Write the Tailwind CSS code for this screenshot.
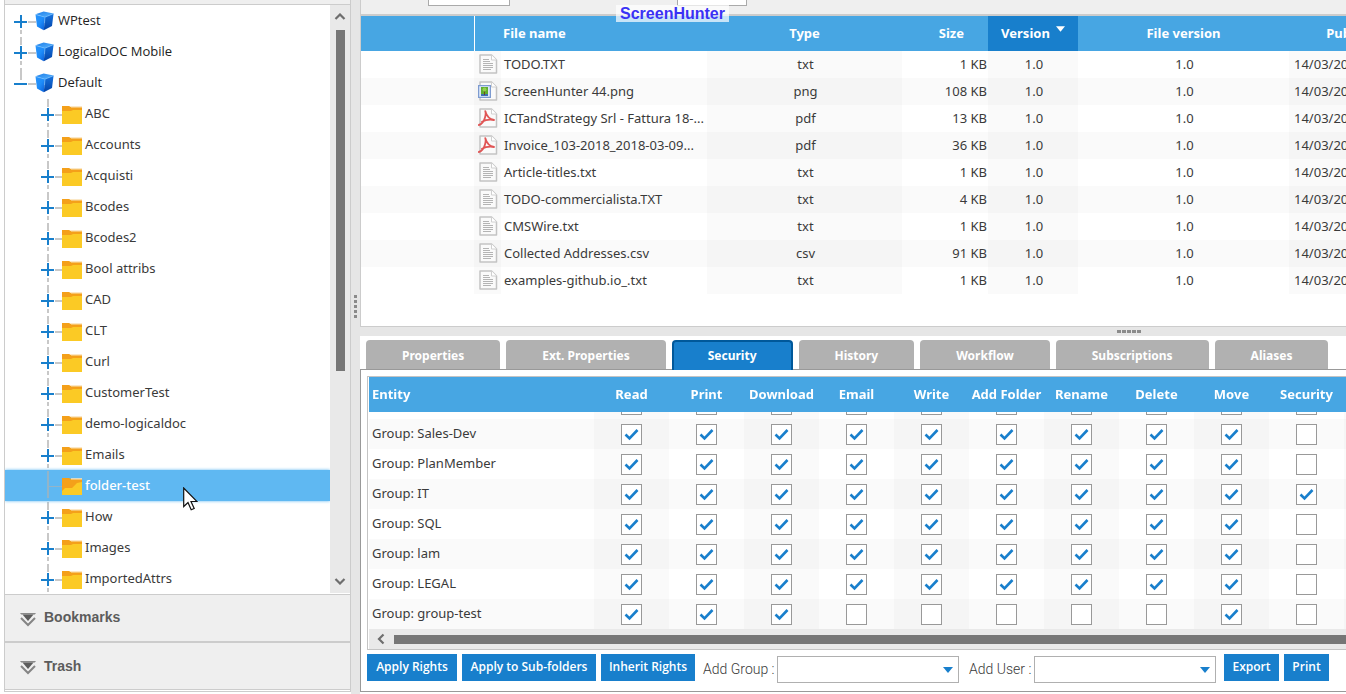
<!DOCTYPE html>
<html lang="en">
<head>
<meta charset="utf-8">
<title>LogicalDOC</title>
<script src="https://cdn.jsdelivr.net/npm/@tailwindcss/browser@4"></script>
</head>
<body class="bg-white text-[13px] text-[#3a3a3a] font-['Noto_Sans','Open_Sans',sans-serif]">

<svg class="absolute size-0" aria-hidden="true">
  <defs>
    <linearGradient id="cubeL" x1="0" y1="0" x2="1" y2="1"><stop offset="0" stop-color="#2a93fa"/><stop offset=".5" stop-color="#1e8dfa"/><stop offset="1" stop-color="#0a5cd8"/></linearGradient>
    <linearGradient id="cubeR" x1="0" y1="0" x2="0" y2="1"><stop offset="0" stop-color="#1673e0"/><stop offset="1" stop-color="#0344a8"/></linearGradient>
    <linearGradient id="cubeT" x1="0" y1="0" x2="1" y2="1"><stop offset="0" stop-color="#1f7fe8"/><stop offset="1" stop-color="#58b4ff"/></linearGradient>
  </defs>
  <symbol id="cube" viewBox="0 0 19 20">
    <path d="M0.5 3.5 10 6 8.8 19.3 2 15.5z" fill="url(#cubeL)"/>
    <path d="M10 6 18.6 2.6 17 15 8.8 19.3z" fill="url(#cubeR)"/>
    <path d="M0.5 3.3 8.6 0.6 18.6 2.6 10 6.2z" fill="url(#cubeT)"/>
    <path d="M0.8 3.6 10 6.2 18.3 2.9M10 6.2 9.500 12" fill="none" stroke="#7cc4ff" stroke-width=".8" opacity=".7"/>
  </symbol>
  <symbol id="folder" viewBox="0 0 20 19">
    <path d="M0 1h7l2 1h11v17H0z" fill="#f4a01a"/>
    <path d="M9 1.2h11v1.3H9z" fill="#fbe3b8"/>
    <path d="M0 6h9l2-1h9v14H0z" fill="#fbca25"/>
  </symbol>
  <symbol id="folder-open" viewBox="0 0 20 19">
    <path d="M0 1h7l2 1h11v16H0z" fill="#f4a01a"/>
    <path d="M9 1.2h11v1.3H9z" fill="#fbe3b8"/>
    <path d="M0 14 3 11h7l5-5 5-1v13H0z" fill="#fbca25"/>
  </symbol>
  <symbol id="page" viewBox="0 0 20 20">
    <path d="M2 1h11.500l5 5v13H2z" fill="#fafafa" stroke="#c3c3c3" stroke-width="1.500" stroke-linejoin="round"/>
    <path d="M13.500 1v5h5" fill="#fff" stroke="#d0d0d0"/>
  </symbol>
  <symbol id="txt" viewBox="0 0 20 20">
    <use href="#page"/>
    <path d="M5 5.500h6M5 7.500h7M5 9.500h10M5 11.500h10M5 13.500h10M5 15.500h8" stroke="#b4b4b4"/>
  </symbol>
  <symbol id="png" viewBox="0 0 20 20">
    <use href="#page"/>
    <rect x=".6" y="4.600" width="11.800" height="11.800" fill="#dce8f8" stroke="#7d9bd0" stroke-width="1.200"/>
    <rect x="3" y="6" width="7" height="7" fill="#5fae2e"/>
    <path d="M3 13h7v2H3z" fill="#3f6fb5"/><path d="M6 10h1v4H6z" fill="#6d4a1d"/><circle cx="6.500" cy="8.500" r="2" fill="#92d050"/>
  </symbol>
  <symbol id="pdf" viewBox="0 0 20 20">
    <use href="#page"/>
    <path d="M.8 17c2.500-.6 5.200-4 6.200-7.500.8-2.600.9-4.500.3-6.300 1.200 4.400 3.700 7.800 8.700 8.800-4.500-.8-8.500-.2-12 1.800" fill="none" stroke="#e05555" stroke-width="1.800" stroke-linecap="round" stroke-linejoin="round"/>
  </symbol>
  <symbol id="tick" viewBox="0 0 15 13"><path d="M1.500 6.500 5.500 10.500 13.500 2" fill="none" stroke="#187fcc" stroke-width="2.600"/></symbol>
  <symbol id="down" viewBox="0 0 10 6"><path d="M0 0h10L5 6z" fill="#187fcc"/></symbol>
  <symbol id="expand" viewBox="0 0 16 14">
    <path d="M0 0h16l-1.200 1.500H1.200z" fill="#8a8a8a"/><path d="M2.500 1.500h11L8 8z" fill="#5c5c5c"/>
    <path d="M1 5l7 7 7-7" fill="none" stroke="#858585" stroke-width="2"/>
  </symbol>
</svg>

<div class="flex h-screen overflow-hidden">

  <!-- Navigation sidebar -->
  <aside class="ml-1 mb-0.5 flex w-[347px] shrink-0 flex-col border border-t-0 border-[#ccc]">
    <div class="h-1 shrink-0 bg-[#efefef]"></div>
    <div class="flex min-h-0 flex-1 border-y border-[#ccc]">
      <ul id="tree" class="relative min-w-0 flex-1 overflow-hidden"></ul>
      <div class="mb-px flex w-5 shrink-0 flex-col items-center bg-[#e9e9e9]">
        <svg class="mt-2 h-[7px] w-3 shrink-0" viewBox="0 0 12 7"><path d="M1.500 6 6 1.500 10.500 6" fill="none" stroke="#6e6e6e" stroke-width="2.200"/></svg>
        <div class="mt-2.5 h-[341px] w-[9px] shrink-0 bg-[#767676]"></div>
        <svg class="mt-auto mb-2 h-[7px] w-3 shrink-0" viewBox="0 0 12 7"><path d="M1.500 1 6 5.500 10.500 1" fill="none" stroke="#6e6e6e" stroke-width="2.200"/></svg>
      </div>
    </div>
    <button class="flex h-[48px] shrink-0 items-center gap-2 border-b-2 border-[#ccc] bg-[#efefef] pb-0.5 pl-[15px] text-left font-['Liberation_Sans',sans-serif] text-[14px] font-bold text-[#5c5c5c]"><svg class="mt-1.5 h-3.5 w-4"><use href="#expand"/></svg>Bookmarks</button>
    <button class="flex h-[47px] shrink-0 items-center gap-2 border-b border-[#ccc] bg-[#efefef] pl-[15px] text-left font-['Liberation_Sans',sans-serif] text-[14px] font-bold text-[#5c5c5c]"><svg class="mt-1 h-3.5 w-4"><use href="#expand"/></svg>Trash</button>
    <div class="h-px shrink-0"></div>
  </aside>

  <div class="flex w-[9px] shrink-0 items-center justify-center bg-[#e6e6e6] pb-20">
    <svg class="h-[26px] w-[3px]" viewBox="0 0 3 26"><path d="M0 1h3v3H0zM0 6h3v3H0zM0 11h3v3H0zM0 16h3v3H0zM0 21h3v3H0z" fill="#8b8b8b"/></svg>
  </div>

  <main class="flex min-w-0 flex-1 flex-col overflow-hidden">

    <!-- Documents list -->
    <section class="relative flex h-[327px] shrink-0 flex-col overflow-hidden border-b border-l border-[#ccc]">
      <div class="flex h-4 shrink-0 items-start gap-[167px] border-b-2 border-[#ccc] bg-[#efefef] pl-[67px]">
        <input aria-label="Page size" class="h-1.5 w-[82px] border border-t-0 border-[#aaa] bg-white">
        <input aria-label="Page" class="h-1.5 w-[70px] border border-t-0 border-[#aaa] bg-white">
      </div>
      <table class="w-[1086px] table-fixed border-collapse">
        <colgroup><col class="w-[113px]"><col class="w-[27px]"><col class="w-[206px]"><col class="w-[195px]"><col class="w-[86px]"><col class="w-[90px]"><col class="w-[211px]"><col class="w-[158px]"></colgroup>
        <thead>
          <tr class="h-[35px] bg-[#47a6e3] text-white">
            <td class="border-r border-white"></td><td></td>
            <th class="p-0 pl-0.5 text-left">File name</th>
            <th class="p-0">Type</th>
            <th class="p-0 pr-6 text-right">Size</th>
            <th class="bg-[#187fcc] p-0"><div class="flex justify-center gap-1.5">Version<svg class="mt-0.5 h-1.5 w-[9px]" viewBox="0 0 10 6"><path d="M0 0h10L5 6z" fill="#fff"/></svg></div></th>
            <th class="p-0">File version</th>
            <th class="p-0">Published on</th>
          </tr>
        </thead>
        <tbody id="docs"></tbody>
      </table>
      <div class="absolute top-[5px] left-[255px] h-[17px] w-[113px] bg-white/70 text-center font-['Liberation_Sans',sans-serif] text-[16px] leading-[18px] font-bold text-[#3a32f5]">ScreenHunter</div>
    </section>

    <div class="flex h-[9px] shrink-0 items-center bg-[#e6e6e6]">
      <svg class="ml-[757px] h-[3px] w-6 shrink-0" viewBox="0 0 24 3"><path d="M0 0h4v3H0zM5 0h4v3H5zM10 0h4v3h-4zM15 0h4v3h-4zM20 0h4v3h-4z" fill="#8b8b8b"/></svg>
    </div>

    <!-- Folder details -->
    <section class="mb-0.5 flex min-h-0 flex-1 flex-col">
      <nav class="relative z-10 -mb-px flex shrink-0 gap-1.5 px-1.5 pt-1 text-[12px] leading-[27px] font-bold whitespace-nowrap text-white">
        <button class="mb-px rounded-t bg-[#b1b1b1] px-9 pt-0.5">Properties</button>
        <button class="mb-px rounded-t bg-[#b1b1b1] px-9 pt-0.5">Ext. Properties</button>
        <button class="rounded-t border-2 border-b-0 border-[#00589a] bg-[#187fcc] px-[34px] pb-px">Security</button>
        <button class="mb-px rounded-t bg-[#b1b1b1] px-9 pt-0.5">History</button>
        <button class="mb-px rounded-t bg-[#b1b1b1] px-9 pt-0.5">Workflow</button>
        <button class="mb-px rounded-t bg-[#b1b1b1] px-9 pt-0.5">Subscriptions</button>
        <button class="mb-px rounded-t bg-[#b1b1b1] px-9 pt-0.5">Aliases</button>
      </nav>
      <div class="flex min-h-0 flex-1 flex-col border-y border-l border-[#999] pt-1.5 pl-1.5">
        <div class="flex min-h-0 flex-1 flex-col border-y border-l border-[#c4c4c4] pl-px">
          <!-- Reversed column so the list opens scrolled to its last row -->
          <div class="flex min-h-0 flex-1 flex-col-reverse overflow-hidden">
            <div class="shrink-0">
              <table class="w-[1050px] table-fixed border-collapse">
                <colgroup><col class="w-[225px]"><col span="11" class="w-[75px]"></colgroup>
                <thead class="sticky top-0 z-10">
                  <tr class="h-[35px] bg-[#47a6e3] whitespace-nowrap text-white">
                    <th class="p-0 pl-[3px] text-left">Entity</th><th class="p-0">Read</th><th class="p-0">Print</th><th class="p-0">Download</th><th class="p-0">Email</th><th class="p-0">Write</th><th class="p-0">Add Folder</th><th class="p-0">Rename</th><th class="p-0">Delete</th><th class="p-0">Move</th><th class="p-0">Security</th><td></td>
                  </tr>
                </thead>
                <tbody id="rights"></tbody>
              </table>
            </div>
          </div>
          <div class="flex h-5 shrink-0 items-center bg-[#e9e9e9] pl-2">
            <svg class="mr-[9px] h-3 w-2" viewBox="0 0 8 12"><path d="M6.500 1.500 2 6l4.500 4.500" fill="none" stroke="#6e6e6e" stroke-width="2.200"/></svg>
            <div class="h-[9px] flex-1 bg-[#767676]"></div>
          </div>
        </div>
        <div class="flex shrink-0 items-start pt-1 pb-2 whitespace-nowrap">
          <div class="flex gap-[5px] font-['Open_Sans',sans-serif] text-[12px] leading-[25px] font-semibold text-white">
            <button class="w-[90px] bg-[#187fcc] pb-0.5">Apply Rights</button>
            <button class="w-[134px] bg-[#187fcc] pb-0.5">Apply to Sub-folders</button>
            <button class="w-[94px] bg-[#187fcc] pb-0.5">Inherit Rights</button>
          </div>
          <label for="grp" class="w-[82px] pt-0.5 pl-2 font-[Roboto,sans-serif] text-[14px] leading-[27px] font-light">Add Group :</label>
          <div class="grid pt-0.5">
            <select id="grp" class="col-start-1 row-start-1 h-[27px] w-[182px] appearance-none border border-[#b0b0b0] bg-white"></select>
            <svg class="pointer-events-none col-start-1 row-start-1 mr-1.5 h-1.5 w-2.5 self-center justify-self-end"><use href="#down"/></svg>
          </div>
          <label for="usr" class="w-[75px] pt-0.5 pl-2.5 font-[Roboto,sans-serif] text-[14px] leading-[27px] font-light">Add User :</label>
          <div class="grid pt-0.5">
            <select id="usr" class="col-start-1 row-start-1 h-[27px] w-[182px] appearance-none border border-[#b0b0b0] bg-white"></select>
            <svg class="pointer-events-none col-start-1 row-start-1 mr-1.5 h-1.5 w-2.5 self-center justify-self-end"><use href="#down"/></svg>
          </div>
          <div class="ml-2 flex gap-[5px] font-['Open_Sans',sans-serif] text-[12px] leading-[25px] font-semibold text-white">
            <button class="w-[55px] bg-[#187fcc] pb-0.5">Export</button>
            <button class="w-[45px] bg-[#187fcc] pb-0.5">Print</button>
          </div>
        </div>
      </div>
    </section>
  </main>
</div>

<script>
const connector = (kind, above, below) => `<svg class="h-[31px] w-[22px] shrink-0" viewBox="0 0 22 31" shape-rendering="crispEdges">
  <path d="${above ? 'M6 1h2v12h-2z' : ''}${kind === 'leaf' ? 'M6 13h2v15h-2zM8 16h14v1H8z' : 'M14 16h8v2h-8z'}${below ? 'M6 25h2v4h-2z' : ''}" fill="${kind === 'leaf' ? '#93b4c8' : '#c8c8c8'}"/>
  ${kind === 'leaf' ? '' : '<path d="M0 16h13v2H0z" fill="#187fcc"/>'}
  ${kind === 'plus' ? '<path d="M5 9h3v15h-3z" fill="#fff"/><path d="M6 10h2v13h-2zM0 16h13v2H0z" fill="#187fcc"/>' : ''}</svg>`;

const spaces = [['WPtest','plus',0,1],['LogicalDOC Mobile','plus',1,1],['Default','minus',1,0]];
const folders = ['ABC','Accounts','Acquisti','Bcodes','Bcodes2','Bool attribs','CAD','CLT','Curl','CustomerTest','demo-logicaldoc','Emails','folder-test','How','Images','ImportedAttrs'];
const pointer = `<svg class="absolute top-[17px] left-[178px] h-6 w-[15px]" viewBox="0 0 15 24"><path d="M.7 1v18.500l4.300-4 3.200 7.300 3-1.300-3.200-7h6z" fill="#fff" stroke="#111" stroke-width="1.200"/></svg>`;
document.getElementById('tree').innerHTML =
  spaces.map(([n, k, a, b]) => `<li class="flex h-[31px] items-center pl-[9px] font-['Open_Sans',sans-serif] font-medium text-[#222]">${connector(k, a, b)}<svg class="-ml-px h-5 w-[19px] shrink-0"><use href="#cube"/></svg><span class="pl-1">${n}</span></li>`).join('') +
  folders.map(n => n === 'folder-test'
    ? `<li class="relative flex h-[31px] items-center bg-[#5fb8f2] pl-9 font-medium text-white shadow-[0_0_3px_#5fb8f2]">${connector('leaf', 1, 0)}<svg class="-ml-px mt-0.5 h-[19px] w-5 shrink-0"><use href="#folder-open"/></svg><span class="pl-[3px]">${n}</span>${pointer}</li>`
    : `<li class="flex h-[31px] items-center pl-9">${connector('plus', 1, 1)}<svg class="-ml-px mt-0.5 h-[19px] w-5 shrink-0"><use href="#folder"/></svg><span class="pl-[3px]">${n}</span></li>`).join('');

const docs = [
  ['txt','TODO.TXT','txt','1 KB'],
  ['png','ScreenHunter 44.png','png','108 KB'],
  ['pdf','ICTandStrategy Srl - Fattura 18-...','pdf','13 KB'],
  ['pdf','Invoice_103-2018_2018-03-09...','pdf','36 KB'],
  ['txt','Article-titles.txt','txt','1 KB'],
  ['txt','TODO-commercialista.TXT','txt','4 KB'],
  ['txt','CMSWire.txt','txt','1 KB'],
  ['txt','Collected Addresses.csv','csv','91 KB'],
  ['txt','examples-github.io_.txt','txt','1 KB']];
document.getElementById('docs').innerHTML = docs.map(([i, n, t, s]) => `<tr class="h-[27px] whitespace-nowrap even:bg-[#fafafa]">
  <td></td><td class="bg-black/2 p-0 pb-0.5 pl-1"><svg class="h-5 w-5"><use href="#${i}"/></svg></td>
  <td class="p-0 pl-[3px]">${n}</td><td class="bg-black/2 p-0 pl-0.5 text-center">${t}</td>
  <td class="p-0 pr-px text-right">${s}</td><td class="bg-black/2 p-0 pl-0.5 text-center">1.0</td>
  <td class="p-0 pl-0.5 text-center">1.0</td><td class="bg-black/2 p-0 pl-[5px]">14/03/2018</td></tr>`).join('');

const rightNames = ['Read','Print','Download','Email','Write','Add Folder','Rename','Delete','Move','Security','Import'];
const groups = [['Sales','11111111100'],['Sales-Dev','11111111100'],['PlanMember','11111111100'],['IT','11111111110'],['SQL','11111111100'],['lam','11111111100'],['LEGAL','11111111100'],['group-test','11100000100']];
document.getElementById('rights').innerHTML = groups.map(([g, bits]) => `<tr class="h-[30px] even:bg-[#fafafa]">
  <td class="p-0 pl-[3px]">Group: ${g}</td>${[...bits].map((b, i) => `<td class="${i % 2 ? '' : 'bg-black/2'} p-0"><div class="grid items-center justify-items-center pr-px">
  <input type="checkbox" aria-label="${g}: ${rightNames[i]}" ${b === '1' ? 'checked' : ''} class="peer col-start-1 row-start-1 h-[21px] w-[21px] appearance-none border border-[#999] bg-white">
  <svg class="pointer-events-none invisible col-start-1 row-start-1 h-[13px] w-[15px] peer-checked:visible"><use href="#tick"/></svg></div></td>`).join('')}</tr>`).join('');
</script>
</body>
</html>
